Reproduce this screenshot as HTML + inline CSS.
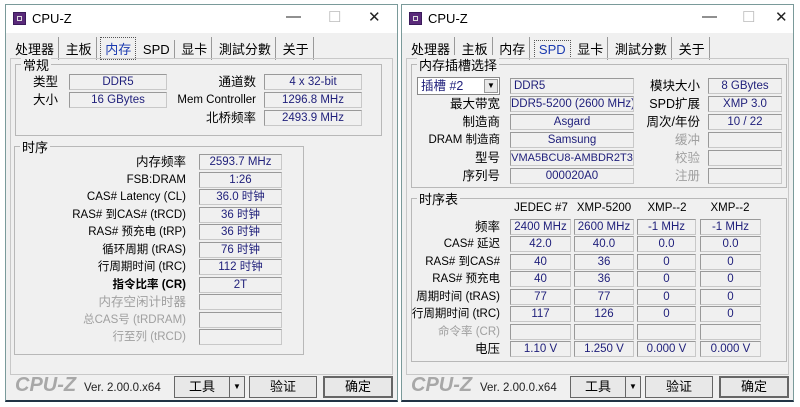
<!DOCTYPE html><html><head><meta charset="utf-8"><style>
body{margin:0;width:800px;height:407px;background:#fff;position:relative;overflow:hidden;font-family:"Liberation Sans","Noto Sans CJK SC",sans-serif;font-size:11px;color:#000}
.w{position:absolute;top:4px;width:393px;height:398px;background:#f0f0f0;border:1px solid #7a9a9a;box-sizing:border-box;border-bottom:2px solid #234}
.tb{position:absolute;left:0;top:0;right:0;height:28px;background:#fff}
.ic{position:absolute;left:7px;top:7px;width:13px;height:13px;background:#5a2a7a;border:1px solid #3a1a5a;box-sizing:border-box}
.ic:after{content:"";position:absolute;left:3px;top:3px;width:5px;height:5px;border:1px solid #ddd;box-sizing:border-box}
.tt{position:absolute;left:26px;top:6px;font-size:13px}
.ctl{position:absolute;top:3px;font-size:15px;color:#222}
.tabs{position:absolute;left:6px;top:32px;font-size:13px;white-space:nowrap}
.tabs span{display:inline-block;padding:2px 4px 2px 3px;border-right:1px solid #999}
.tabs .a{border:1px dotted #555;color:#1a3ab0;padding:1px 4px;background:#f0f0f0}
.pn{position:absolute;left:4px;top:53px;width:383px;height:317px;border:1px solid #c8c8c8;box-sizing:border-box}
.g{position:absolute;border:1px solid #b8b8b8;box-sizing:border-box}
.gt{position:absolute;top:-10px;left:5px;background:#f0f0f0;padding:0 2px;font-size:13px}
.b{position:absolute;height:16px;border:1px solid #c8c8c8;border-top-color:#999;border-left-color:#999;box-sizing:border-box;text-align:center;line-height:14px;color:#1e1e7a;font-size:11.5px;background:#f0f0f0;white-space:nowrap;overflow:hidden}
.l{position:absolute;text-align:right;white-space:nowrap;line-height:16px;font-size:12.5px}
.d{color:#a0a0a0}
.h{position:absolute;text-align:center;width:62px;font-size:11.5px}
.bt{position:absolute;top:371px;height:22px;border:1px solid #666;box-sizing:border-box;text-align:center;line-height:20px;font-size:13px;background:#e8e8e8}
.lg{position:absolute;left:9px;top:369px;font-size:20px;font-style:italic;font-weight:bold;color:#a8a8a8}
.vr{position:absolute;left:78px;top:377px;font-size:11.5px;color:#222}
</style></head><body>

<div class="w" style="left:5px">
<div class="tb"><div class="ic"></div><div class="tt">CPU-Z</div><div class="ctl" style="left:280px">—</div><div class="ctl" style="left:322px;color:#bbb">☐</div><div class="ctl" style="left:362px">✕</div></div>
<div class="tabs"><span>处理器</span> <span>主板</span> <span class="a">内存</span> <span>SPD</span> <span>显卡</span> <span>測試分數</span> <span>关于</span></div>
<div class="pn"></div>
<div class="g" style="left:9px;top:59px;width:367px;height:72px"><div class="gt">常规</div></div>
<div class="l" style="left:20px;top:69px;width:32px">类型</div><div class="b" style="left:63px;top:69px;width:98px">DDR5</div>
<div class="l" style="left:20px;top:87px;width:32px">大小</div><div class="b" style="left:63px;top:87px;width:98px">16 GBytes</div>
<div class="l" style="left:150px;top:69px;width:100px">通道数</div><div class="b" style="left:258px;top:69px;width:98px">4 x 32-bit</div>
<div class="l" style="left:150px;top:87px;width:100px;font-size:11.5px">Mem Controller</div><div class="b" style="left:258px;top:87px;width:98px">1296.8 MHz</div>
<div class="l" style="left:150px;top:105px;width:100px">北桥频率</div><div class="b" style="left:258px;top:105px;width:98px">2493.9 MHz</div>

<div class="g" style="left:8px;top:141px;width:290px;height:209px"><div class="gt">时序</div></div>
<div class="l" style="left:20px;top:149px;width:160px">内存频率</div><div class="b" style="left:193px;top:149px;width:83px">2593.7 MHz</div>
<div class="l" style="left:20px;top:167px;width:160px;font-size:11.5px">FSB:DRAM</div><div class="b" style="left:193px;top:167px;width:83px">1:26</div>
<div class="l" style="left:20px;top:184px;width:160px;font-size:11.5px">CAS# Latency (CL)</div><div class="b" style="left:193px;top:184px;width:83px">36.0 时钟</div>
<div class="l" style="left:20px;top:202px;width:160px;font-size:11.5px">RAS# 到CAS# (tRCD)</div><div class="b" style="left:193px;top:202px;width:83px">36 时钟</div>
<div class="l" style="left:20px;top:219px;width:160px;font-size:11.5px">RAS# 预充电 (tRP)</div><div class="b" style="left:193px;top:219px;width:83px">36 时钟</div>
<div class="l" style="left:20px;top:237px;width:160px;font-size:11.5px">循环周期 (tRAS)</div><div class="b" style="left:193px;top:237px;width:83px">76 时钟</div>
<div class="l" style="left:20px;top:254px;width:160px;font-size:11.5px">行周期时间 (tRC)</div><div class="b" style="left:193px;top:254px;width:83px">112 时钟</div>
<div class="l" style="left:20px;top:272px;width:160px;font-size:11.5px;font-weight:bold">指令比率 (CR)</div><div class="b" style="left:193px;top:272px;width:83px">2T</div>
<div class="l d" style="left:20px;top:289px;width:160px">内存空闲计时器</div><div class="b" style="left:193px;top:289px;width:83px"></div>
<div class="l d" style="left:20px;top:307px;width:160px;font-size:11.5px">总CAS号 (tRDRAM)</div><div class="b" style="left:193px;top:307px;width:83px"></div>
<div class="l d" style="left:20px;top:324px;width:160px;font-size:11.5px">行至列 (tRCD)</div><div class="b" style="left:193px;top:324px;width:83px"></div>

<div class="lg">CPU-Z</div><div class="vr">Ver. 2.00.0.x64</div>
<div class="bt" style="left:168px;width:56px">工具</div><div class="bt" style="left:223px;width:16px;font-size:8px">▼</div>
<div class="bt" style="left:243px;width:68px">验证</div><div class="bt" style="left:317px;width:70px;border-width:2px;line-height:18px">确定</div>
</div>

<div class="w" style="left:401px">
<div class="tb"><div class="ic"></div><div class="tt">CPU-Z</div><div class="ctl" style="left:300px">—</div><div class="ctl" style="left:340px;color:#bbb">☐</div><div class="ctl" style="left:373px">✕</div></div>
<div class="tabs"><span>处理器</span> <span>主板</span> <span>内存</span> <span class="a">SPD</span> <span>显卡</span> <span>測試分數</span> <span>关于</span></div>
<div class="pn" style="left:4px"></div>
<div class="g" style="left:9px;top:59px;width:376px;height:124px"><div class="gt">内存插槽选择</div></div>
<div style="position:absolute;left:15px;top:72px;width:83px;height:18px;background:#fff;border:1px solid #888;box-sizing:border-box;font-size:12.5px;color:#1e1e7a;line-height:16px;padding-left:3px">插槽 #2<span style="position:absolute;right:1px;top:1px;width:14px;height:14px;background:#e8e8e8;border:1px solid #999;box-sizing:border-box;font-size:8px;text-align:center;line-height:12px;color:#000">▼</span></div>
<div class="b" style="left:108px;top:73px;width:124px;text-align:left;padding-left:3px">DDR5</div>
<div class="l" style="left:10px;top:91px;width:88px">最大带宽</div><div class="b" style="left:108px;top:91px;width:124px">DDR5-5200 (2600 MHz)</div>
<div class="l" style="left:10px;top:109px;width:88px">制造商</div><div class="b" style="left:108px;top:109px;width:124px">Asgard</div>
<div class="l" style="left:0px;top:127px;width:98px;font-size:11.5px">DRAM 制造商</div><div class="b" style="left:108px;top:127px;width:124px">Samsung</div>
<div class="l" style="left:10px;top:145px;width:88px">型号</div><div class="b" style="left:108px;top:145px;width:124px;font-size:11px">VMA5BCU8-AMBDR2T3</div>
<div class="l" style="left:10px;top:163px;width:88px">序列号</div><div class="b" style="left:108px;top:163px;width:124px">000020A0</div>
<div class="l" style="left:230px;top:73px;width:68px">模块大小</div><div class="b" style="left:306px;top:73px;width:74px">8 GBytes</div>
<div class="l" style="left:230px;top:91px;width:68px">SPD扩展</div><div class="b" style="left:306px;top:91px;width:74px">XMP 3.0</div>
<div class="l" style="left:230px;top:109px;width:68px">周次/年份</div><div class="b" style="left:306px;top:109px;width:74px">10 / 22</div>
<div class="l d" style="left:230px;top:127px;width:68px">缓冲</div><div class="b" style="left:306px;top:127px;width:74px"></div>
<div class="l d" style="left:230px;top:145px;width:68px">校验</div><div class="b" style="left:306px;top:145px;width:74px"></div>
<div class="l d" style="left:230px;top:163px;width:68px">注册</div><div class="b" style="left:306px;top:163px;width:74px"></div>

<div class="g" style="left:9px;top:193px;width:376px;height:164px"><div class="gt">时序表</div></div>
<div class="h" style="left:108px;top:197px">JEDEC #7</div><div class="h" style="left:171px;top:197px">XMP-5200</div><div class="h" style="left:234px;top:197px">XMP--2</div><div class="h" style="left:297px;top:197px">XMP--2</div>

<div class="l" style="left:10px;top:214px;width:88px">频率</div>
<div class="b" style="left:108px;top:214px;width:61px">2400 MHz</div><div class="b" style="left:172px;top:214px;width:60px">2600 MHz</div><div class="b" style="left:235px;top:214px;width:59px">-1 MHz</div><div class="b" style="left:298px;top:214px;width:61px">-1 MHz</div>
<div class="l" style="left:10px;top:231px;width:88px;font-size:11.5px">CAS# 延迟</div>
<div class="b" style="left:108px;top:231px;width:61px">42.0</div><div class="b" style="left:172px;top:231px;width:60px">40.0</div><div class="b" style="left:235px;top:231px;width:59px">0.0</div><div class="b" style="left:298px;top:231px;width:61px">0.0</div>
<div class="l" style="left:10px;top:249px;width:88px;font-size:11.5px">RAS# 到CAS#</div>
<div class="b" style="left:108px;top:249px;width:61px">40</div><div class="b" style="left:172px;top:249px;width:60px">36</div><div class="b" style="left:235px;top:249px;width:59px">0</div><div class="b" style="left:298px;top:249px;width:61px">0</div>
<div class="l" style="left:10px;top:266px;width:88px;font-size:11.5px">RAS# 预充电</div>
<div class="b" style="left:108px;top:266px;width:61px">40</div><div class="b" style="left:172px;top:266px;width:60px">36</div><div class="b" style="left:235px;top:266px;width:59px">0</div><div class="b" style="left:298px;top:266px;width:61px">0</div>
<div class="l" style="left:0px;top:284px;width:98px;font-size:11.5px">周期时间 (tRAS)</div>
<div class="b" style="left:108px;top:284px;width:61px">77</div><div class="b" style="left:172px;top:284px;width:60px">77</div><div class="b" style="left:235px;top:284px;width:59px">0</div><div class="b" style="left:298px;top:284px;width:61px">0</div>
<div class="l" style="left:0px;top:301px;width:98px;font-size:11.5px">行周期时间 (tRC)</div>
<div class="b" style="left:108px;top:301px;width:61px">117</div><div class="b" style="left:172px;top:301px;width:60px">126</div><div class="b" style="left:235px;top:301px;width:59px">0</div><div class="b" style="left:298px;top:301px;width:61px">0</div>
<div class="l d" style="left:0px;top:319px;width:98px;font-size:11.5px">命令率 (CR)</div>
<div class="b" style="left:108px;top:319px;width:61px"></div><div class="b" style="left:172px;top:319px;width:60px"></div><div class="b" style="left:235px;top:319px;width:59px"></div><div class="b" style="left:298px;top:319px;width:61px"></div>
<div class="l" style="left:10px;top:336px;width:88px">电压</div>
<div class="b" style="left:108px;top:336px;width:61px">1.10 V</div><div class="b" style="left:172px;top:336px;width:60px">1.250 V</div><div class="b" style="left:235px;top:336px;width:59px">0.000 V</div><div class="b" style="left:298px;top:336px;width:61px">0.000 V</div>

<div class="lg">CPU-Z</div><div class="vr">Ver. 2.00.0.x64</div>
<div class="bt" style="left:168px;width:56px">工具</div><div class="bt" style="left:223px;width:16px;font-size:8px">▼</div>
<div class="bt" style="left:243px;width:68px">验证</div><div class="bt" style="left:317px;width:70px;border-width:2px;line-height:18px">确定</div>
</div>
</body></html>
